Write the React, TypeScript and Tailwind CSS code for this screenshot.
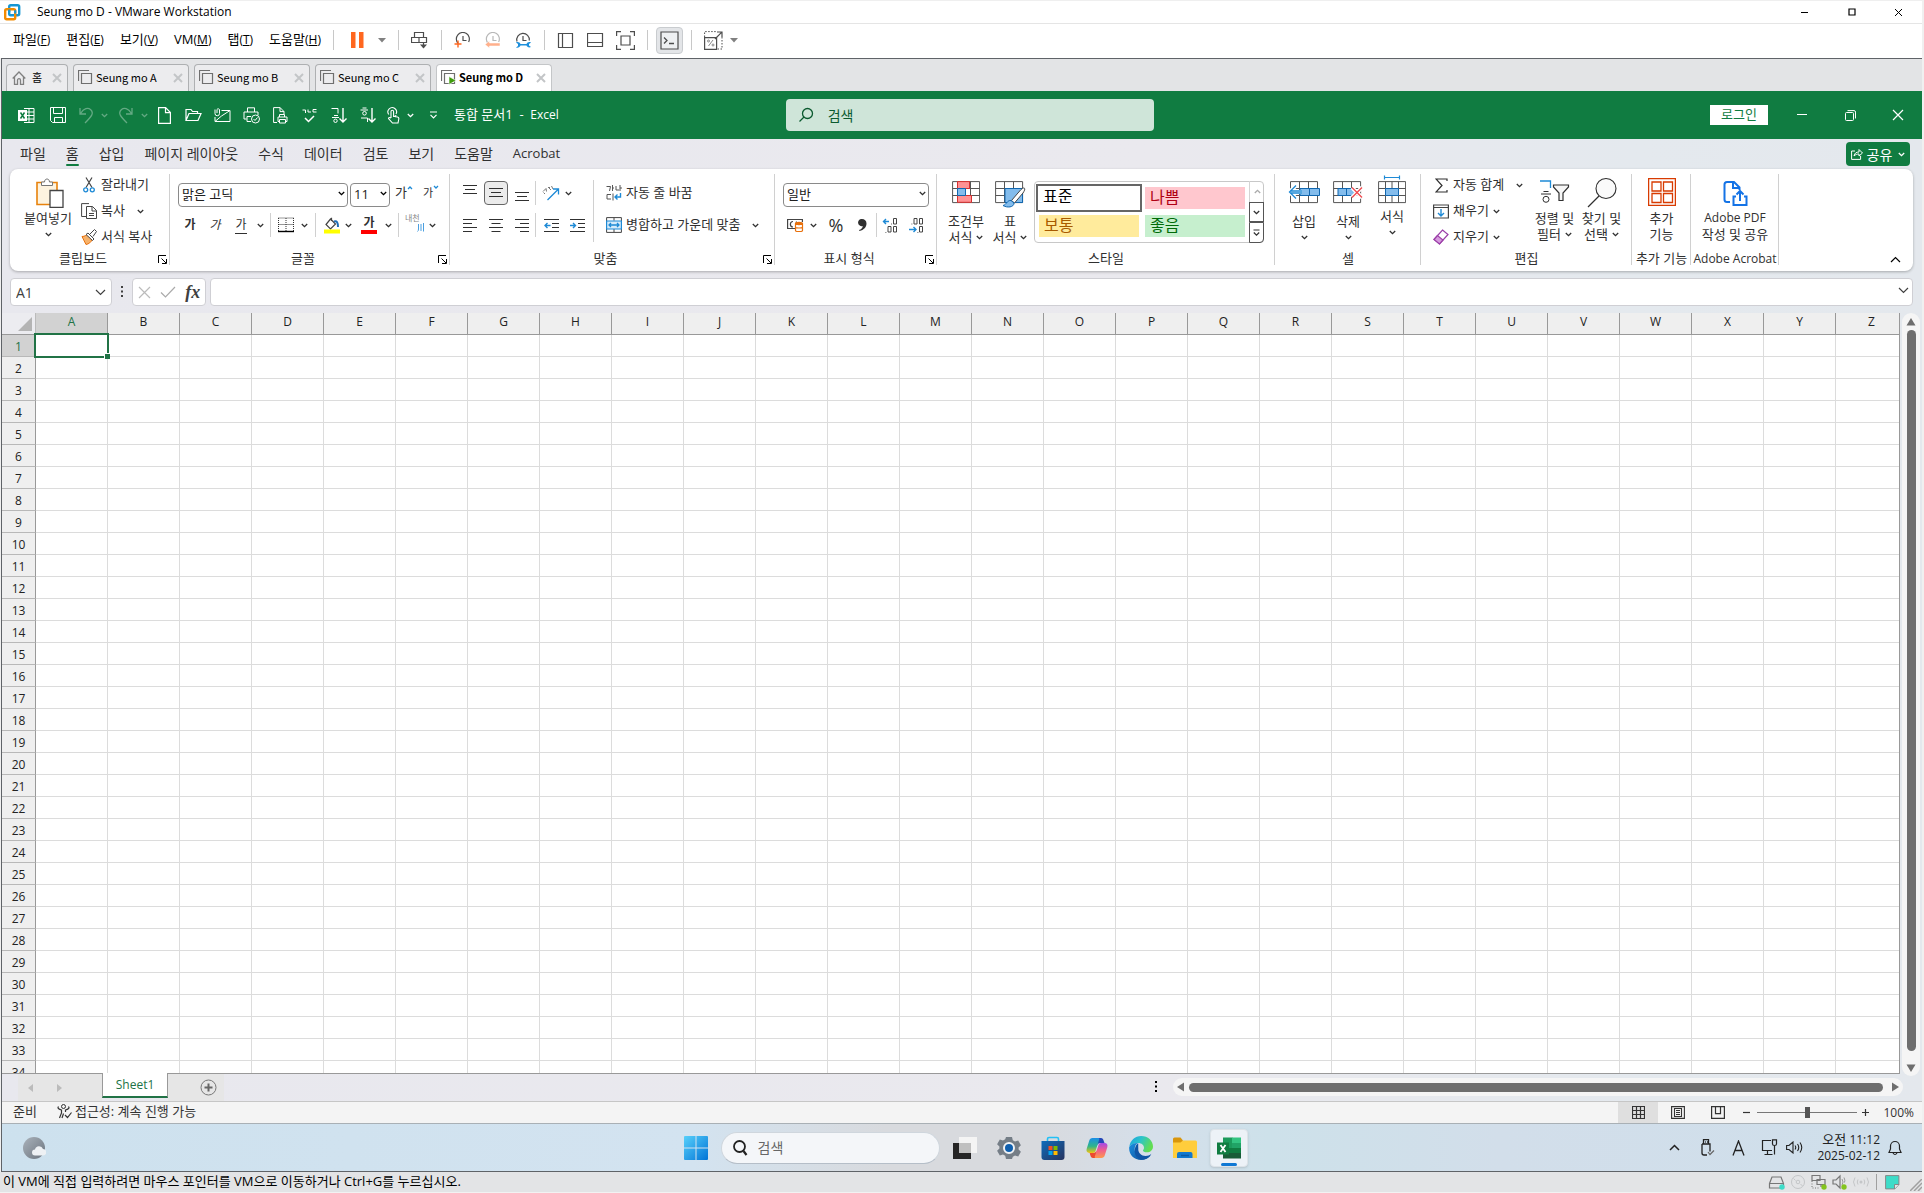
import type { ReactNode } from "react";

type IcoProps = { w: number; h: number; className?: string; children: ReactNode };

function Ico({ w, h, className = "", children }: IcoProps) {
  return (
    <svg width={w} height={h} viewBox={`0 0 ${w} ${h}`} fill="none" stroke="currentColor" aria-hidden="true" className={`shrink-0 ${className}`}>
      {children}
    </svg>
  );
}

function Chevron({ className = "" }: { className?: string }) {
  return (
    <Ico w={7} h={5} className={className}>
      <path d="M.8 1 3.5 3.7 6.2 1" strokeWidth="1.3" />
    </Ico>
  );
}

function DropButton({ label, className = "w-4" }: { label: string; className?: string }) {
  return (
    <button aria-label={label} className={`flex h-6 shrink-0 items-center justify-center ${className}`}>
      <Chevron />
    </button>
  );
}

function IconButton({ label, className = "w-[26px]", children }: { label: string; className?: string; children: ReactNode }) {
  return (
    <button aria-label={label} className={`flex h-6 shrink-0 items-center justify-center ${className}`}>
      {children}
    </button>
  );
}

/* ---------- VMware window ---------- */

function VmTitleBar() {
  return (
    <header className="flex h-6 shrink-0 items-center border-y border-b-[#e5e5e5] border-t-[#efefef] bg-white pl-1 text-black">
      <Ico w={17} h={17}>
        <rect x="5.2" y="1.2" width="10" height="10" rx="1.5" stroke="#1696d3" strokeWidth="2.4" />
        <rect x="1.2" y="5.2" width="10" height="10" rx="1.5" stroke="#f38b00" strokeWidth="2.4" />
        <path d="M5.2 8V5.5M11.2 9.5V6.2" stroke="#1696d3" strokeWidth="2.2" />
      </Ico>
      <h1 className="ml-4 flex-1 text-[12px]">Seung mo D - VMware Workstation</h1>
      <button aria-label="최소화" className="flex h-5 w-[47px] items-center justify-center">
        <Ico w={9} h={9}><path d="M1 4.5h7" /></Ico>
      </button>
      <button aria-label="최대화" className="flex h-5 w-[47px] items-center justify-center">
        <Ico w={8} h={8}><path d="M1 1h6v6H1z" strokeWidth="1.2" /></Ico>
      </button>
      <button aria-label="닫기" className="flex h-5 w-[47px] items-center justify-center">
        <Ico w={9} h={9}><path d="m1 1 7 7M8 1 1 8" /></Ico>
      </button>
    </header>
  );
}

const vmMenus = [
  { name: "파일", mnemonic: "F" },
  { name: "편집", mnemonic: "E" },
  { name: "보기", mnemonic: "V" },
  { name: "VM", mnemonic: "M" },
  { name: "탭", mnemonic: "T" },
  { name: "도움말", mnemonic: "H" },
];

function VmSeparator() {
  return <div className="h-5 w-px shrink-0 bg-[#c8c8c8]" />;
}

function Caret() {
  return <Ico w={8} h={5}><path d="M0 0h8L4 4.5z" fill="#808080" stroke="none" /></Ico>;
}

function ClockFace({ color = "#4d4d4d" }: { color?: string }) {
  return <path d="M4.2 11.5A6.5 6.5 0 1 1 14.6 10M9 4v4.5h3.5" stroke={color} strokeWidth="1.2" />;
}

function VmToolbar() {
  return (
    <div className="flex h-[34px] shrink-0 items-center bg-white pb-0.5 pl-[13px] text-[#4d4d4d]">
      <nav className="mr-3 flex gap-4 text-[13px] text-black">
        {vmMenus.map((m) => (
          <button key={m.mnemonic} className="whitespace-nowrap">
            {m.name}<span className="text-[12px]">(<u>{m.mnemonic}</u>)</span>
          </button>
        ))}
      </nav>
      <VmSeparator />
      <IconButton label="일시 중단" className="ml-2 w-8">
        <Ico w={13} h={16}><path d="M0 0h4.5v16H0zM8 0h4.5v16H8z" fill="#ff671f" stroke="none" /></Ico>
      </IconButton>
      <IconButton label="전원 옵션" className="mr-2 w-4"><Caret /></IconButton>
      <VmSeparator />
      <IconButton label="Ctrl+Alt+Del 보내기" className="mx-2 w-[26px]">
        <Ico w={17} h={17}>
          <path d="M3.5.5h9v5h-9zM.5 5.5H8v5H.5zM8 5.5h7.5v5H8zM12.5 11v4.5" strokeWidth="1.2" />
          <path d="M9 12.5h7l-3.5 4z" fill="currentColor" stroke="none" />
        </Ico>
      </IconButton>
      <VmSeparator />
      <div className="mx-1.5 flex">
        <IconButton label="스냅샷 만들기" className="w-[30px]">
          <Ico w={18} h={17}><ClockFace /><path d="M4 8.5v7M.5 12h7" stroke="#ff671f" strokeWidth="1.4" /></Ico>
        </IconButton>
        <IconButton label="스냅샷으로 되돌리기" className="w-[30px]">
          <Ico w={18} h={17}>
            <ClockFace color="#b8b8b8" />
            <path d="M1 12.5 5.5 9v2H16v3H5.5v2z" fill="#ffb08c" stroke="#fff" strokeWidth=".5" />
          </Ico>
        </IconButton>
        <IconButton label="스냅샷 관리" className="w-[30px]">
          <Ico w={18} h={17}>
            <path d="M3 9.500A6.300 6.300 0 1 1 15.300 8.500M9 4v4.500h3.500" stroke="#4d4d4d" strokeWidth="1.2" />
            <path d="M2 10.500c2-1 4 0 4.500 1.500h6c.5-1.500 2.500-2.500 4.500-1.500l-2 1.500v1.500l2 1.500c-2 1-4 0-4.500-1.500h-6C6 15 4 16.500 2 15.500l2-1.500v-2z" fill="#1e90dc" stroke="none" />
          </Ico>
        </IconButton>
      </div>
      <VmSeparator />
      <div className="mx-1.5 flex">
        <IconButton label="라이브러리" className="w-[30px]">
          <Ico w={17} h={17}><path d="M1.5 1.5h14v14h-14zM5.5 1.5v14" strokeWidth="1.2" /></Ico>
        </IconButton>
        <IconButton label="축소판" className="w-[30px]">
          <Ico w={17} h={17}><path d="M.5 1.5h15v13H.5zM.5 10.5h15" strokeWidth="1.2" /></Ico>
        </IconButton>
        <IconButton label="전체 화면" className="w-[30px]">
          <Ico w={19} h={19}>
            <path d="M.6 5V.6H5M14 .6h4.400V5M18.400 14v4.400H14M5 18.400H.6V14M5 5h9v9H5z" strokeWidth="1.2" />
          </Ico>
        </IconButton>
      </div>
      <VmSeparator />
      <button aria-label="콘솔 보기" className="mx-2 flex size-[27px] items-center justify-center rounded border border-[#c9cccf] bg-[#e3e5e8]">
        <Ico w={19} h={19}>
          <path d="M1 1h17v17H1z" fill="#eef0f2" strokeWidth="1.2" />
          <path d="m4 6.500 3 3-3 3M9 12.500h5" strokeWidth="1.3" />
        </Ico>
      </button>
      <VmSeparator />
      <IconButton label="화면 맞춤" className="ml-2 w-7">
        <Ico w={19} h={19}>
          <path d="M.6 6.600h12v11.800H.6zM11 8 17.800 1.200M13 1h5v5" strokeWidth="1.2" />
          <path d="M.6 6V.6H13M18 6v12h-5" strokeDasharray="1.5 1.5" />
          <path d="m4.500 15 4.500-6" strokeWidth="1" stroke="#888" /><circle cx="4.500" cy="10" r="1" stroke="#888" /><circle cx="9" cy="14" r="1" stroke="#888" />
        </Ico>
      </IconButton>
      <IconButton label="맞춤 옵션" className="w-3"><Caret /></IconButton>
    </div>
  );
}

const vmTabs = ["Seung mo A", "Seung mo B", "Seung mo C", "Seung mo D"];

function CloseX() {
  return <Ico w={10} h={10}><path d="m1 1 8 8M9 1 1 9" stroke="#c3c5c7" strokeWidth="2" /></Ico>;
}

function VmTabs() {
  return (
    <div className="flex h-8 shrink-0 items-end gap-[5px] bg-[#e3e4e6] pl-1 font-['Noto_Sans_CJK_KR',sans-serif] text-[11px] text-black">
      <div className="flex h-[27px] w-[62px] items-center rounded-t border border-b-0 border-[#aeb0b2] bg-[#ececee] px-[5px] pb-px">
        <Ico w={14} h={14} className="text-[#808080]">
          <path d="m.7 7.500 6.300-6.500 6.300 6.500M2.500 6v7.300h3V9.200a1.500 1.500 0 0 1 3 0v4.100h3V6" strokeWidth="1.3" />
        </Ico>
        <button className="ml-1.5 flex-1 text-left">홈</button>
        <button aria-label="홈 닫기"><CloseX /></button>
      </div>
      {vmTabs.map((name) => {
        const active = name === "Seung mo D";
        return (
          <div
            key={name}
            className={`flex h-[27px] w-[116px] items-center rounded-t border border-b-0 pb-px pl-1 pr-[5px] ${active ? "border-[#c4c6c8] bg-white font-bold" : "border-[#aeb0b2] bg-[#ececee]"}`}
          >
            <Ico w={15} h={15} className="text-[#6f6f6f]">
              <path d="M3.500 3.500h10v10h-10zM.5 11V.5H11" strokeWidth="1.2" />
              {active && <path d="M8 6.500v8l7-4z" fill="#3f9c0c" stroke="#fff" strokeWidth=".6" />}
            </Ico>
            <button className="ml-[3px] flex-1 whitespace-nowrap text-left">{name}</button>
            <button aria-label={`${name} 닫기`}><CloseX /></button>
          </div>
        );
      })}
    </div>
  );
}

/* ---------- Excel title bar ---------- */

function ExcelTitleBar() {
  return (
    <div className="flex h-12 shrink-0 items-center bg-[#107c41] text-white">
      <div className="flex flex-1 items-center pl-2">
        <IconButton label="Excel" className="w-8">
          <Ico w={17} h={17}>
            <path d="M6 1.500h10v14H6M11 1.500v14M6 5h10M6 8.500h10M6 12h10" />
            <path d="M0 3h9v11H0z" fill="#fff" stroke="none" />
            <path d="m2.500 5.500 4 6M6.500 5.500l-4 6" stroke="#107c41" strokeWidth="1.5" />
          </Ico>
        </IconButton>
        <IconButton label="저장" className="w-8">
          <Ico w={17} h={17}><path d="M.5.5h15v15h-13l-2-2zM3.500.5v6h9v-6M4.500 15.500v-5h8v5" /></Ico>
        </IconButton>
        <IconButton label="실행 취소" className="w-6 opacity-35">
          <Ico w={15} h={17}><path d="M1 1v6h6M1.500 6.500C5 1 9 .5 11.500 2.500c4 3.500 1 7-5.500 13.500" strokeWidth="1.3" /></Ico>
        </IconButton>
        <DropButton label="실행 취소 목록" className="w-3 opacity-35" />
        <IconButton label="다시 실행" className="w-[30px] opacity-35">
          <Ico w={15} h={17}><path d="M14 1v6H8M13.500 6.500C10 1 6 .5 3.500 2.500c-4 3.500-1 7 5.500 13.500" strokeWidth="1.3" /></Ico>
        </IconButton>
        <DropButton label="다시 실행 목록" className="w-2 opacity-35" />
        <IconButton label="새로 만들기" className="ml-0.5 w-[29px]">
          <Ico w={13} h={17}><path d="M.6.6h7l4.800 5v10.800H.6zM7.500.6v5h5" strokeWidth="1.2" /></Ico>
        </IconButton>
        <IconButton label="열기" className="w-[29px]">
          <Ico w={17} h={14}><path d="M1 12.500V1.500h5l1.500 2h5v2M1 12.500l3-7h12l-3 7z" strokeWidth="1.2" /></Ico>
        </IconButton>
        <IconButton label="메일" className="w-[29px]">
          <Ico w={17} h={15}>
            <path d="M7.500 2.500H16v11H1V9M7.500 8 16 2.500M1 13.500 7.500 8" />
            <path d="M1 1.500v4a2 2 0 0 0 4.500 0v-4a1.500 1.500 0 0 0-2.500 0V5" />
          </Ico>
        </IconButton>
        <IconButton label="빠른 인쇄" className="w-[29px]">
          <Ico w={18} h={17}>
            <path d="M4.500 5V.8h7V5M3.500 12H1V5h14v3M8 9.500H4v5h4" />
            <circle cx="12.500" cy="12" r="4" /><path d="m10.500 12 1.500 1.500 2.500-3" />
          </Ico>
        </IconButton>
        <IconButton label="인쇄 미리 보기" className="w-[29px]">
          <Ico w={15} h={17}><path d="M4 15.500H.6V.6h6.500l3.900 4v2.500M7 .6v4h4M6.500 10V7.500h5V10M6.500 14.500H5V10h9v4.500h-1.500M6.500 12.500h6V16h-6z" /></Ico>
        </IconButton>
        <IconButton label="맞춤법 검사" className="w-[29px]">
          <Ico w={16} h={15}><path d="M.5 2h3v3M6 1.500V4h3M14.500 1.500H11V4h3.500" /><path d="m3 10 3.500 3.500L12 8" strokeWidth="1.5" /></Ico>
        </IconButton>
        <IconButton label="오름차순 정렬" className="w-[29px]">
          <Ico w={17} h={17}><path d="M1.500 1.500h6.500v5M4 8.500h4M2 10.500h7" /><circle cx="5.500" cy="13.800" r="1.700" /><path d="M13 1v14M9.500 11.500 13 15l3.500-3.500" strokeWidth="1.4" /></Ico>
        </IconButton>
        <IconButton label="내림차순 정렬" className="w-[29px]">
          <Ico w={17} h={17}><path d="M3.500 1h4M1.500 3H9M2 11h6.500v4" /><circle cx="5.500" cy="6.300" r="1.800" /><path d="M13 1v14M9.500 11.500 13 15l3.500-3.500" strokeWidth="1.4" /></Ico>
        </IconButton>
        <IconButton label="터치/마우스 모드" className="w-[22px]">
          <Ico w={14} h={18}>
            <path d="M5 12V5.500a1.300 1.300 0 0 1 2.600 0V10l4 1c1 .3 1.400 1 1.200 2l-.8 4H6.500L2.500 12.500c0-1.200 1.500-1.500 2.500-.3M2.800 8.500A4.300 4.300 0 1 1 10 8M7.600 8v3M9.800 9v2.500" strokeWidth="1.1" />
          </Ico>
        </IconButton>
        <DropButton label="터치 모드 옵션" className="w-3" />
        <IconButton label="빠른 실행 도구 모음 사용자 지정" className="ml-1.5 w-[22px]">
          <Ico w={9} h={8}><path d="M1 1h7M1.500 3.800l3 3 3-3" strokeWidth="1.2" /></Ico>
        </IconButton>
        <p className="ml-2.5 whitespace-pre text-[13px]">통합 문서1  -  <span className="text-[12px]">Excel</span></p>
      </div>
      <label className="ml-2 flex h-8 w-[19.2%] items-center rounded-sm bg-[#cfe5d9] px-3 text-[#0b5a2f]">
        <Ico w={16} h={16}><circle cx="9.500" cy="6.500" r="5" strokeWidth="1.3" /><path d="M6 10 1.500 14.500" strokeWidth="1.3" /></Ico>
        <input aria-label="검색" placeholder="검색" className="ml-3.5 w-full bg-transparent text-[14px] outline-none placeholder:text-[#0b5a2f]" />
      </label>
      <div className="flex flex-1 items-center justify-end">
        <button className="mr-2.5 flex h-5 w-[58px] items-center justify-center bg-white text-[13px] text-[#107c41]">로그인</button>
        <button aria-label="창 최소화" className="flex h-8 w-12 items-center justify-center"><Ico w={10} h={10}><path d="M0 4.500h10" /></Ico></button>
        <button aria-label="이전 크기로" className="flex h-8 w-12 items-center justify-center">
          <Ico w={11} h={11}><rect x=".5" y="2.500" width="8" height="8" rx="1" /><path d="M2.500.6H9q1.500 0 1.500 1.500V8.500" /></Ico>
        </button>
        <button aria-label="창 닫기" className="flex h-8 w-12 items-center justify-center"><Ico w={12} h={12}><path d="m1 1 10 10M11 1 1 11" strokeWidth="1.2" /></Ico></button>
      </div>
    </div>
  );
}

/* ---------- Ribbon ---------- */

const ribbonTabs = ["파일", "홈", "삽입", "페이지 레이아웃", "수식", "데이터", "검토", "보기", "도움말", "Acrobat"];

function RibbonTabs() {
  return (
    <nav className="flex h-[30px] shrink-0 items-center pl-2 pr-3">
      {ribbonTabs.map((t) => (
        <button key={t} className={`relative h-7 whitespace-nowrap px-2.5 text-[#303030] ${t === "Acrobat" ? "text-[13px]" : "pb-0.5 text-[14px]"}`}>
          {t}
          {t === "홈" && <span className="absolute inset-x-2.5 bottom-0.5 h-0.5 rounded bg-[#107c41]" />}
        </button>
      ))}
      <button className="ml-auto flex h-6 w-16 items-center justify-center gap-1 rounded bg-[#107c41] text-[14px] text-white">
        <Ico w={12} h={12}>
          <path d="M4 3H.6v8.400h9V8" /><path d="M3 8c.5-3 2.500-4 5-4V1.500L11.500 5 8 8V6C6 6 4.500 6.500 3 8z" />
        </Ico>
        공유
        <Chevron className="ml-0.5" />
      </button>
    </nav>
  );
}

function Group({ name, width, launcher = false, children }: { name: string; width: string; launcher?: boolean; children: ReactNode }) {
  return (
    <section className={`relative flex h-full shrink-0 flex-col ${width}`}>
      <div className="flex h-[78px] items-start">{children}</div>
      <div className={`relative flex h-6 items-center justify-center ${launcher ? "pr-3.5" : ""}`}>
        <h2 className={`whitespace-nowrap text-[#303030] ${name === "Adobe Acrobat" ? "text-[12px]" : "text-[13px]"}`}>{name}</h2>
        {launcher && (
          <button aria-label={`${name} 설정`} className="absolute right-[3px] top-2">
            <Ico w={9} h={9}><path d="M.5 8V.5H8M3.500 3.500 8 8M8.500 4v4.500H4" /></Ico>
          </button>
        )}
      </div>
      <div className="absolute bottom-1.5 right-0 top-[5px] w-px bg-[#d0d0d0]" />
    </section>
  );
}

function BigButton({ icon, lines, drop = false, className }: { icon: ReactNode; lines: string[]; drop?: boolean; className: string }) {
  return (
    <button className={`flex shrink-0 flex-col items-center text-[13px] leading-4 text-[#303030] ${className}`}>
      <span className="flex h-[33px] items-start justify-center">{icon}</span>
      <span className="whitespace-nowrap">{lines[0]}</span>
      <span className="flex h-4 items-center gap-1 whitespace-nowrap">
        {lines[1]}
        {drop && <Chevron />}
      </span>
    </button>
  );
}

function SmallButton({ icon, text, drop = false, chevronGap = "ml-1" }: { icon: ReactNode; text: string; drop?: boolean; chevronGap?: string }) {
  return (
    <button className="flex h-[26px] items-center whitespace-nowrap text-[13px] text-[#303030]">
      <span className="flex w-5 shrink-0 items-center">{icon}</span>
      {text}
      {drop && <Chevron className={chevronGap} />}
    </button>
  );
}

function Divider({ className = "" }: { className?: string }) {
  return <div className={`h-6 w-px shrink-0 bg-[#d0d0d0] ${className}`} />;
}

function Combo({ label, options, className }: { label: string; options: string[]; className: string }) {
  return (
    <div className={`relative h-6 shrink-0 ${className}`}>
      <select aria-label={label} className="h-6 w-full appearance-none rounded border border-[#8a8a8a] bg-white pb-0.5 pl-[3px] text-[13px] leading-5 text-[#202020]">
        {options.map((o) => <option key={o}>{o}</option>)}
      </select>
      <Chevron className="pointer-events-none absolute right-[3px] top-2.5" />
    </div>
  );
}

function Lines({ d, className = "" }: { d: string; className?: string }) {
  return <Ico w={14} h={14} className={className}><path d={d} /></Ico>;
}

function ClipboardGroup() {
  return (
    <Group name="클립보드" width="w-[160px]" launcher>
      <BigButton
        className="ml-3 w-[52px] pt-2"
        drop
        lines={["붙여넣기"]}
        icon={
          <Ico w={28} h={31} className="ml-1">
            <path d="M1 5.500h20v22H1z" fill="#fdf3df" stroke="#e8820c" strokeWidth="1.6" />
            <path d="M5.500 8.500V5h3c0-4 5-4 5 0h3v3.500z" fill="#fff" stroke="#767676" />
            <path d="M14 13.500h13v17H14z" fill="#fff" stroke="#444" strokeWidth="1.3" />
          </Ico>
        }
      />
      <div className="ml-[7px] flex flex-col pt-[3px]">
        <SmallButton
          text="잘라내기"
          icon={
            <Ico w={14} h={16} className="ml-0.5">
              <path d="m3 .5 6 10M9 .5l-6 10" stroke="#444" strokeWidth="1.2" />
              <circle cx="2.700" cy="12.800" r="2" stroke="#1e8ad6" strokeWidth="1.3" /><circle cx="9.300" cy="12.800" r="2" stroke="#1e8ad6" strokeWidth="1.3" />
            </Ico>
          }
        />
        <SmallButton
          text="복사"
          drop
          chevronGap="ml-3"
          icon={
            <Ico w={17} h={16}>
              <path d="M5 13.500H.6V.6H8M5.500 3.500h6l4 4v8h-10zM11 3.500V8h4.500M8 10.500h5M8 12.500h5" stroke="#444" />
            </Ico>
          }
        />
        <SmallButton
          text="서식 복사"
          icon={
            <Ico w={17} h={16}>
              <path d="M1 7.500c3 0 4-1.500 5-2l5 5.500c-1 2-3 4-6 4.500z" fill="#f6b26b" stroke="#e8700c" />
              <path d="m5 5.500 2-1.500 6 6-1.500 1.500zM9 5l4.500-4.500 2 2L12 7.500" fill="#fff" stroke="#444" />
            </Ico>
          }
        />
      </div>
    </Group>
  );
}

function FontGroup() {
  return (
    <Group name="글꼴" width="w-[280px]" launcher>
      <div className="flex flex-col gap-2 pl-2 pt-3">
        <div className="flex items-center">
          <Combo label="글꼴" options={["맑은 고딕"]} className="w-[170px]" />
          <Combo label="글꼴 크기" options={["11"]} className="ml-0.5 w-10" />
          <button aria-label="글꼴 크기 크게" className="ml-px flex h-6 w-[26px] items-start justify-center pt-0.5 text-[13px] text-[#303030]">
            가<Ico w={6} h={5} className="mt-0.5"><path d="m1 4 2-2 2 2" stroke="#1e8ad6" strokeWidth="1.3" /></Ico>
          </button>
          <button aria-label="글꼴 크기 작게" className="ml-px flex h-6 w-[26px] items-start justify-center pt-1 text-[11px] text-[#303030]">
            가<Ico w={6} h={5}><path d="m1 1 2 2 2-2" stroke="#1e8ad6" strokeWidth="1.3" /></Ico>
          </button>
        </div>
        <div className="flex h-6 items-center text-[12px] text-[#303030]">
          <button aria-label="굵게" className="w-6 pb-px font-bold">가</button>
          <button aria-label="기울임꼴" className="w-[26px] pb-px italic">가</button>
          <button aria-label="밑줄" className="w-[26px]"><span className="border-b border-[#303030]">가</span></button>
          <DropButton label="밑줄 옵션" className="w-3" />
          <Divider className="mx-1" />
          <IconButton label="테두리" className="w-[22px]">
            <Ico w={16} h={16}><path d="M.5 1h15M.5 1v13M15.500 1v13M8 1v13M.5 7.500h15" strokeDasharray="1 1" /><path d="M0 14.500h16" stroke="#000" strokeWidth="1.4" /></Ico>
          </IconButton>
          <DropButton label="테두리 옵션" className="w-3.5" />
          <Divider className="mx-1" />
          <IconButton label="채우기 색" className="w-6">
            <Ico w={16} h={17}>
              <path d="m6.500 2 5 5-5 5L2 7.500zM7.500 4V.8" stroke="#444" strokeWidth="1.2" /><path d="M10 4.500c3-1 4 1 4 5.500" stroke="#1e6fb8" strokeWidth="2" />
              <path d="M0 12.500h16v4H0z" fill="#ff0" stroke="none" />
            </Ico>
          </IconButton>
          <DropButton label="채우기 색 옵션" className="w-2" />
          <button aria-label="글꼴 색" className="ml-1 flex h-6 w-[26px] flex-col items-center justify-center font-bold leading-3">
            가<span className="mt-px h-1 w-4 bg-[#f00]" />
          </button>
          <DropButton label="글꼴 색 옵션" className="w-3" />
          <Divider className="ml-1 mr-1.5" />
          <button aria-label="윗주 필드" className="flex h-6 w-[22px] flex-col items-start text-[8px] leading-[10px] text-[#888]">
            내천
            <Ico w={8} h={9} className="ml-3"><path d="M1.500 1v5q0 2-1 2.500M4 1v7M6.500 0v8.500" stroke="#4a9fe0" /></Ico>
          </button>
          <DropButton label="윗주 옵션" className="w-2.5" />
        </div>
      </div>
    </Group>
  );
}

function AlignGroup() {
  return (
    <Group name="맞춤" width="w-[325px]" launcher>
      <div className="flex flex-col gap-2 pl-[7px] pt-3 text-[#303030]">
        <div className="flex items-center">
          <IconButton label="위쪽 맞춤"><Lines d="M0 1.500h14M2 5.500h10M0 9.500h14" className="-mt-1" /></IconButton>
          <button aria-label="가운데 맞춤" className="mx-px flex size-6 items-center justify-center rounded border border-[#666] bg-[#ebebeb]"><Lines d="M0 2.500h14M2 6.500h10M0 10.500h14" /></button>
          <IconButton label="아래쪽 맞춤"><Lines d="M0 4.500h14M2 8.500h10M0 12.500h14" className="mt-1" /></IconButton>
          <Divider className="mr-1" />
          <IconButton label="방향" className="w-[22px]">
            <Ico w={18} h={16}>
              <path d="m1 6.500 3-3 .5 3M3 9 1.500 7.500M6 2l3 3M8 2 7 3M9.500 1 11 4" stroke="#777" />
              <path d="M5.500 15 16 4.500M11 4h5.500v5.500" stroke="#1e8ad6" strokeWidth="1.3" />
            </Ico>
          </IconButton>
          <DropButton label="방향 옵션" className="w-3" />
        </div>
        <div className="flex items-center">
          <IconButton label="왼쪽 맞춤"><Lines d="M0 1.500h14M0 5.500h9M0 9.500h14M0 13.500h9" /></IconButton>
          <IconButton label="가로 가운데 맞춤"><Lines d="M0 1.500h14M2.500 5.500h9M0 9.500h14M2.500 13.500h9" /></IconButton>
          <IconButton label="오른쪽 맞춤"><Lines d="M0 1.500h14M5 5.500h9M0 9.500h14M5 13.500h9" /></IconButton>
          <Divider className="mr-0.5" />
          <IconButton label="내어쓰기">
            <Ico w={15} h={14}><path d="M0 1.500h15M8 5.500h7M8 9.500h7M0 13.500h15" /><path d="M6.500 7.500H1M3.500 5 1 7.500 3.500 10" stroke="#1e8ad6" strokeWidth="1.4" /></Ico>
          </IconButton>
          <IconButton label="들여쓰기">
            <Ico w={15} h={14}><path d="M0 1.500h15M8 5.500h7M8 9.500h7M0 13.500h15" /><path d="M0 7.500h5.500M3 5l2.500 2.500L3 10" stroke="#1e8ad6" strokeWidth="1.4" /></Ico>
          </IconButton>
        </div>
      </div>
      <div className="ml-[3px] mt-[11px] h-[62px] w-px shrink-0 bg-[#d0d0d0]" />
      <div className="ml-3 flex flex-col gap-1.5 pt-[11px]">
        <SmallButton
          text="자동 줄 바꿈"
          icon={
            <Ico w={16} h={16}>
              <path d="M.5 1.500h4l-1 4.500M6.500 0v6M6.500 3H8M10 1v4h3M14 0v6M14 3h2M5 9.500H1V14h4M7 8.500v7" stroke="#555" />
              <path d="M14.500 8v4h-5M11.500 9.500 9 12l2.500 2.500" stroke="#1e8ad6" strokeWidth="1.4" />
            </Ico>
          }
        />
        <SmallButton
          text="병합하고 가운데 맞춤"
          drop
          chevronGap="ml-3"
          icon={
            <Ico w={16} h={16}>
              <path d="M.6.6h14.800v14.800H.6zM8 .6v3M8 12v3" stroke="#444" />
              <path d="M.6 4h14.800v8H.6z" fill="#d6ebfa" stroke="#1e8ad6" strokeWidth="1.2" /><path d="M3 8h10M5 6 3 8l2 2M11 6l2 2-2 2" stroke="#1e8ad6" strokeWidth="1.3" />
            </Ico>
          }
        />
      </div>
    </Group>
  );
}

function DecimalIcon({ top, bottom, arrow }: { top: string; bottom: string; arrow: string }) {
  return (
    <Ico w={17} h={17}>
      <path d={arrow} stroke="#1e8ad6" strokeWidth="1.4" />
      <path d={top} stroke="#444" />
      <path d={bottom} stroke="#444" />
    </Ico>
  );
}

function NumberGroup() {
  return (
    <Group name="표시 형식" width="w-[162px]" launcher>
      <div className="flex flex-col gap-2 pl-2 pt-3 text-[#303030]">
        <Combo label="표시 형식" options={["일반"]} className="w-[146px]" />
        <div className="flex items-center">
          <IconButton label="회계 표시 형식" className="w-6">
            <Ico w={17} h={14}>
              <path d="M8 10.500H.6V1.500h14.800V4M6 3.500C2.500 3.500 2.500 9 6 9M9.500 3.500 8.500 9" stroke="#444" strokeWidth="1.2" />
              <path d="M8.500 5.500v7c0 1.500 7 1.500 7 0v-7zM8.500 5.500c0-1.500 7-1.500 7 0s-7 1.500-7 0M8.500 9c0 1.300 7 1.300 7 0" fill="#fff" stroke="#e8700c" strokeWidth="1.2" />
            </Ico>
          </IconButton>
          <DropButton label="회계 형식 옵션" className="w-3" />
          <button aria-label="백분율" className="ml-1.5 h-6 w-[22px] text-[18px] leading-6">%</button>
          <IconButton label="쉼표 스타일" className="ml-1 w-[22px]">
            <Ico w={9} h={12}><path d="M4 0a3.600 3.600 0 1 0 .8 7C4.500 9 3.300 10.500 1 11l.5 1C6 11 8.500 8 8.500 4.500 8.500 1.500 6.500 0 4 0z" fill="#303030" stroke="none" /></Ico>
          </IconButton>
          <Divider className="ml-[3px] mr-0.5" />
          <IconButton label="자릿수 늘림" className="w-[22px]">
            <DecimalIcon arrow="M7 4.500H1.500M4 2 1.500 4.500 4 7" top="M9 7h.8M11.500 1.500h3V7h-3z" bottom="M3.500 15.500h.8M6 9.500h3V15H6zM11.500 9.500h3V15h-3z" />
          </IconButton>
          <IconButton label="자릿수 줄임" className="ml-1 w-[22px]">
            <DecimalIcon arrow="M1 12.500h7M5.500 10 8 12.500 5.500 15" top="M3.500 7h.8M6 1.500h3V7H6zM11.500 1.500h3V7h-3z" bottom="M9.500 15.500h.8M11.500 9.500h3V15h-3z" />
          </IconButton>
        </div>
      </div>
    </Group>
  );
}

const tableGrid = "M.6 1.600h27v21H.6zM9.500 1.600v21M18.500 1.600v21M.6 8.500h27M.6 15.500h27";

function StyleGroup() {
  return (
    <Group name="스타일" width="w-[338px]">
      <BigButton
        className="ml-[7px] w-11 pt-[11px]"
        drop
        lines={["조건부", "서식"]}
        icon={
          <Ico w={28} h={24}>
            <path d={tableGrid} stroke="#555" fill="#fff" />
            <path d="M5.500 1.600h12v6.900h-12zM5.500 15.500h14v6.800h-14z" fill="#ff9294" stroke="#d8302f" /><path d="M5.500 8.500h8v7h-8z" fill="#83bcec" stroke="#1167b0" />
          </Ico>
        }
      />
      <BigButton
        className="w-11 pt-[11px]"
        drop
        lines={["표", "서식"]}
        icon={
          <Ico w={31} h={28}>
            <path d={tableGrid} stroke="#555" fill="#fff" />
            <path d="M10 8.500h17.500v14H10z" fill="#83bcec" stroke="#1167b0" />
            <path d="M28.500 8c2 0 1.500 2-.5 5l-8.500 10-3-2.500L26 9.500q1.500-1.500 2.500-1.500z" fill="#fff" stroke="#444" />
            <path d="M16 20.500c-4-.5-4 4-8 5 4 2.500 11 2 11-2.500z" fill="#83bcec" stroke="#1167b0" />
          </Ico>
        }
      />
      <div className="ml-0.5 mt-3 flex h-[62px] w-[230px] rounded border border-[#c8c8c8] text-[16px] leading-5">
        <div className="flex flex-1 flex-col gap-[3px] pl-px pt-0.5">
          <div className="flex items-center gap-[3px]">
            <button className="h-7 w-[106px] border-2 border-[#666] bg-white pb-1 pl-[5px] text-left text-black">표준</button>
            <button className="h-[22px] w-[100px] bg-[#ffc7ce] pb-1 pl-[5px] text-left text-[#b00014]">나쁨</button>
          </div>
          <div className="flex gap-1.5 pl-[3px]">
            <button className="h-[22px] w-[100px] bg-[#ffeb9c] pb-1 pl-[5px] text-left text-[#a85a00]">보통</button>
            <button className="h-[22px] w-[100px] bg-[#c6efce] pb-1 pl-[5px] text-left text-[#006b09]">좋음</button>
          </div>
        </div>
        <div className="-my-px -mr-px flex w-[15px] flex-col text-[#303030]">
          <button aria-label="이전 스타일" className="flex h-[21px] items-center justify-center border-l border-[#d4d4d4] text-[#aaa]"><Chevron className="rotate-180" /></button>
          <button aria-label="다음 스타일" className="flex h-5 items-center justify-center border border-[#555]"><Chevron /></button>
          <button aria-label="자세히" className="flex h-[21px] items-center justify-center rounded-br border border-[#555]">
            <Ico w={7} h={8}><path d="M.5 1h6M.8 3.500l2.700 2.700 2.700-2.700" strokeWidth="1.2" /></Ico>
          </button>
        </div>
      </div>
    </Group>
  );
}

function CellGroup() {
  return (
    <Group name="셀" width="w-[146px]">
      <BigButton
        className="ml-[7px] w-11 pt-[11px]"
        drop
        lines={["삽입"]}
        icon={
          <Ico w={32} h={24}>
            <path d="M2.500 1.600h27v21h-27zM11.500 1.600v21M20.500 1.600v21M2.500 8.500h27M2.500 15.500h27" stroke="#555" fill="#fff" />
            <path d="M12 8.500h19.500v7H12zM21.500 8.500v7" fill="#83bcec" stroke="#1167b0" />
            <path d="M14 12H2M8 5.500 1.500 12 8 18.500" stroke="#fff" strokeWidth="4" /><path d="M14 11H2M14 13H2M8 5.500 1.500 12 8 18.500" stroke="#1e8ad6" strokeWidth="1.3" />
          </Ico>
        }
      />
      <BigButton
        className="w-11 pt-[11px]"
        drop
        lines={["삭제"]}
        icon={
          <Ico w={30} h={24}>
            <path d={tableGrid} stroke="#555" fill="#fff" />
            <path d="M5 8.500h14l3 3.500-3 3.500H5zM13.500 8.500v7" fill="#83bcec" stroke="#1167b0" />
            <path d="M19 7.500 29 17.500M29 7.500 19 17.500" stroke="#fff" strokeWidth="4" /><path d="M19 7.500 29 17.500M29 7.500 19 17.500" stroke="#f04a4f" strokeWidth="1.4" />
          </Ico>
        }
      />
      <BigButton
        className="w-11 pt-1.5"
        drop
        lines={["서식"]}
        icon={
          <Ico w={28} h={29}>
            <path d="M.6 6.600h27v21H.6zM7.500 6.600v21M20.500 6.600v21M14 6.600v7M14 20.500v7M.6 13.500h27M.6 20.500h27" stroke="#555" fill="#fff" />
            <path d="M7.500 13.500h13v7h-13z" fill="#83bcec" stroke="#1167b0" /><path d="M6.500 2.500h15M6.500.5v4M21.500.5v4" stroke="#1e8ad6" strokeWidth="1.2" />
          </Ico>
        }
      />
    </Group>
  );
}

function EditGroup() {
  return (
    <Group name="편집" width="w-[211px]">
      <div className="ml-3 flex w-[95px] flex-col pt-[3px]">
        <SmallButton text="자동 합계" drop chevronGap="ml-3" icon={<Ico w={14} h={15} className="ml-0.5"><path d="M12 3V1H1l6 6.500L1 14h11v-2" strokeWidth="1.2" /></Ico>} />
        <SmallButton
          text="채우기"
          drop
          icon={<Ico w={16} h={15}><path d="M.6 1h14.800v13H.6zM.6 3.500h14.800" stroke="#444" strokeWidth="1.2" /><path d="M8 5v7M5 9l3 3 3-3" stroke="#1e8ad6" strokeWidth="1.4" /></Ico>}
        />
        <SmallButton
          text="지우기"
          drop
          icon={<Ico w={16} h={16}><path d="M9.500 1 15 5.500 6.500 15 1 10.500z" fill="#fff" stroke="#9b3fa8" strokeWidth="1.2" /><path d="M4.500 6.500 1 10.500 6.500 15l3.500-4z" fill="#d79ade" stroke="#9b3fa8" strokeWidth="1.2" /></Ico>}
        />
      </div>
      <BigButton
        className="ml-[3px] w-[47px] pt-2"
        drop
        lines={["정렬 및", "필터"]}
        icon={
          <Ico w={30} h={26} className="mt-0.5">
            <path d="M0 2h10.500v7" stroke="#1e8ad6" strokeWidth="1.3" /><path d="M3.500 12.500h5M1 15h10" /><circle cx="6" cy="20.300" r="3" />
            <path d="M13.500 6h15v2L23 14v7.500h-4V14l-5.500-6z" fill="#f7f7f7" strokeWidth="1.2" />
          </Ico>
        }
      />
      <BigButton
        className="w-[47px] pt-2"
        drop
        lines={["찾기 및", "선택"]}
        icon={<Ico w={30} h={31}><circle cx="19" cy="11.500" r="10" fill="#fafafa" strokeWidth="1.1" /><path d="M12 19 1 30" strokeWidth="1.2" /></Ico>}
      />
    </Group>
  );
}

function Ribbon() {
  return (
    <div className="ml-2 mr-[9px] flex h-[102px] shrink-0 rounded-lg bg-white shadow-[0_1px_3px_rgba(0,0,0,0.28)]">
      <ClipboardGroup />
      <FontGroup />
      <AlignGroup />
      <NumberGroup />
      <StyleGroup />
      <CellGroup />
      <EditGroup />
      <Group name="추가 기능" width="w-[59px]">
        <BigButton
          className="w-full pt-2"
          lines={["추가", "기능"]}
          icon={<Ico w={28} h={29}><path d="M.6 1.600h26.800v26.800H.6zM4 5h9v9H4zM15.500 5h9v9h-9zM4 16.500h9v9H4zM15.500 16.500h9v9h-9z" stroke="#d83b01" strokeWidth="1.3" /></Ico>}
        />
      </Group>
      <Group name="Adobe Acrobat" width="w-[88px]">
        <button className="flex w-full flex-col items-center pt-2 text-[12px] leading-4 text-[#303030]">
          <span className="flex h-[33px] items-start pt-1">
            <Ico w={25} h={26}>
              <path d="M7 21H4q-2.500 0-2.500-2.500V3.500Q1.500 1 4 1h7l5.500 5.500V9M10 1v6h6.500" stroke="#1473e6" strokeWidth="2" />
              <path d="M13 15.500h-2.500V24h13v-8.500H21M17 20v-9M13.500 13.500 17 10l3.500 3.500" stroke="#1473e6" strokeWidth="2" />
            </Ico>
          </span>
          <span className="whitespace-nowrap">Adobe PDF</span>
          <span className="whitespace-nowrap text-[13px]">작성 및 공유</span>
        </button>
      </Group>
      <button aria-label="리본 메뉴 축소" className="mb-2 ml-auto mr-3 self-end">
        <Ico w={11} h={7}><path d="m1 6 4.500-4.500L10 6" strokeWidth="1.2" /></Ico>
      </button>
    </div>
  );
}

function FormulaBar() {
  return (
    <div className="my-[7px] ml-2 mr-[9px] flex h-7 shrink-0 items-center text-[#404040]">
      <div className="flex h-full w-[102px] items-center rounded border border-[#cfcfd4] bg-white px-[5px]">
        <input aria-label="이름 상자" defaultValue="A1" className="w-full min-w-0 text-[14px] outline-none" />
        <button aria-label="이름 목록"><Ico w={11} h={7}><path d="m1 1 4.500 4.500L10 1" strokeWidth="1.2" /></Ico></button>
      </div>
      <Ico w={20} h={12}><path d="M9 1h2M9 5.500h2M9 10h2" strokeWidth="2" /></Ico>
      <div className="flex h-full w-[74px] items-center justify-around rounded border border-[#cfcfd4] bg-white">
        <button aria-label="취소"><Ico w={13} h={13}><path d="m1 1 11 11M12 1 1 12" stroke="#bbb" strokeWidth="1.2" /></Ico></button>
        <button aria-label="입력"><Ico w={16} h={12}><path d="M1 6.500 5.500 11 15 1" stroke="#aaa" strokeWidth="1.2" /></Ico></button>
        <button aria-label="함수 삽입" className="font-['Liberation_Serif',serif] text-[18px] font-bold italic leading-5">fx</button>
      </div>
      <div className="ml-1 flex h-full flex-1 items-center rounded border border-[#cfcfd4] bg-white pl-1.5 pr-[3px]">
        <input aria-label="수식 입력줄" className="w-full min-w-0 text-[14px] outline-none" />
        <button aria-label="수식 입력줄 확장" className="mb-1"><Ico w={11} h={7}><path d="m1 1 4.500 4.500L10 1" strokeWidth="1.2" /></Ico></button>
      </div>
    </div>
  );
}

/* ---------- Sheet ---------- */

const columns = "ABCDEFGHIJKLMNOPQRSTUVWXYZ".split("");
const rows = Array.from({ length: 34 }, (_, i) => i + 1);

function Sheet() {
  return (
    <div className="flex min-h-0 flex-1">
      <div className="min-w-0 flex-1 overflow-hidden border-b border-r border-[#999] bg-white">
        <table className="w-[1906px] table-fixed border-separate border-spacing-0 text-[12px] leading-4 text-[#222]">
          <colgroup>
            <col className="w-[34px]" />
            {columns.map((c) => <col key={c} className="w-[72px]" />)}
          </colgroup>
          <thead>
            <tr>
              <th className="h-[22px] border-b border-r border-b-[#999] border-r-[#bbb] bg-[#ececf0] p-0">
                <Ico w={14} h={14} className="ml-4"><path d="M14 0v14H0z" fill="#b4b4b4" stroke="none" /></Ico>
              </th>
              {columns.map((c) => (
                <th
                  key={c}
                  scope="col"
                  className={`h-[22px] border-b border-r border-[#999] p-0 pb-1 font-normal ${c === "A" ? "bg-[#d2d2d2] text-[#217346]" : "bg-[#efefef]"}`}
                >
                  {c}
                </th>
              ))}
            </tr>
          </thead>
          <tbody>
            {rows.map((r) => (
              <tr key={r}>
                <th
                  scope="row"
                  className={`h-[22px] border-b border-r border-b-[#b8b8b8] border-r-[#999] p-0 pt-0.5 font-normal ${r === 1 ? "bg-[#d2d2d2] text-[#217346]" : "bg-[#efefef]"}`}
                >
                  {r}
                </th>
                {columns.map((c) => (
                  <td key={c} className="relative border-b border-r border-[#dcdcdc] p-0">
                    {c === "A" && r === 1 && (
                      <span className="absolute -left-0.5 -top-0.5 z-10 h-[25px] w-[75px] border-2 border-[#217346]">
                        <span className="absolute -bottom-[3px] -right-[3px] size-1.5 border-l border-t border-white bg-[#217346]" />
                      </span>
                    )}
                  </td>
                ))}
              </tr>
            ))}
          </tbody>
        </table>
      </div>
      <div className="-mb-0.5 ml-0.5 mr-0.5 flex w-[18px] flex-col items-center justify-between rounded-full bg-[#f5f5f5] pb-1 pt-[5px]">
        <button aria-label="위로 스크롤" className="leading-none"><Ico w={10} h={8}><path d="M5 0 9.500 7.500H.5z" fill="#6e6e6e" stroke="none" /></Ico></button>
        <div className="mb-[5px] mt-1 w-[9px] flex-1 rounded-full bg-[#6e6e6e]" />
        <button aria-label="아래로 스크롤" className="mt-2 leading-none"><Ico w={10} h={8}><path d="M5 8 .5.5h9z" fill="#6e6e6e" stroke="none" /></Ico></button>
      </div>
    </div>
  );
}

function SheetTabs() {
  return (
    <div className="flex h-[27px] shrink-0 items-start">
      <div className="ml-4 flex h-full w-[84px] items-center gap-6 bg-[#e6e6e6] pl-2.5 text-[#bbb]">
        <button aria-label="이전 시트"><Ico w={5} h={8}><path d="M5 0v8L0 4z" fill="currentColor" stroke="none" /></Ico></button>
        <button aria-label="다음 시트"><Ico w={5} h={8}><path d="M0 0v8l5-4z" fill="currentColor" stroke="none" /></Ico></button>
      </div>
      <button className="-mt-px h-[25px] w-[66px] border-x border-b-2 border-x-[#999] border-b-[#217346] bg-white text-[12px] text-[#217346]">Sheet1</button>
      <div className="flex h-full w-14 items-center bg-[#e6e6e6] pl-8">
        <button aria-label="새 시트">
          <Ico w={17} h={17}><circle cx="8.500" cy="8.500" r="7.500" stroke="#777" /><path d="M8.500 4.500v8M4.500 8.500h8" stroke="#666" strokeWidth="2" /></Ico>
        </button>
      </div>
      <div className="ml-auto flex w-[40%] items-center pt-1">
        <Ico w={4} h={12}><path d="M1 1h2M1 5.500h2M1 10h2" strokeWidth="2" /></Ico>
        <div className="ml-[15px] mr-[19px] flex h-[18px] flex-1 items-center rounded-full bg-[#f5f5f5] px-1">
          <button aria-label="왼쪽으로 스크롤"><Ico w={8} h={10}><path d="M7 .5v9L0 5z" fill="#6e6e6e" stroke="none" /></Ico></button>
          <div className="ml-1 mr-2 h-[9px] flex-1 rounded-full bg-[#6e6e6e]" />
          <button aria-label="오른쪽으로 스크롤"><Ico w={8} h={10}><path d="M1 .5v9L8 5z" fill="#6e6e6e" stroke="none" /></Ico></button>
        </div>
      </div>
    </div>
  );
}

function StatusBar() {
  return (
    <div className="flex h-[23px] shrink-0 items-center border-y border-b-[#a9b0b5] border-t-[#c6c6c6] bg-[#f4f4f4] pl-[11px] pr-2 text-[13px] text-[#333]">
      <span className="pb-0.5">준비</span>
      <button className="ml-5 flex items-center gap-[3px] pb-0.5">
        <Ico w={15} h={15}>
          <circle cx="6.500" cy="2.500" r="2" />
          <path d="M1.500 2.500C0 4.500 2.500 5.500 4.500 6v3L2.500 14M11.500 2.500c1.500 2-1 3-3 3.500v2M6.500 9.500 5 14M8 11l2.500 2.500 4-5" strokeWidth="1.2" />
        </Ico>
        접근성: 계속 진행 가능
      </button>
      <div className="ml-auto flex h-full items-center">
        <button aria-label="기본 보기" className="flex h-full w-10 items-center justify-center bg-[#dfdfdf]"><Ico w={13} h={13}><path d="M.5.5h12v12H.5zM4.500.5v12M8.500.5v12M.5 4.500h12M.5 8.500h12" strokeWidth="1.2" /></Ico></button>
        <button aria-label="페이지 레이아웃 보기" className="flex h-full w-10 items-center justify-center"><Ico w={14} h={13}><path d="M.6.6h12.800v11.800H.6zM3.500 2.500h7v8h-7zM5 4.500h4M5 6.500h4M5 8.500h4" strokeWidth="1.1" /></Ico></button>
        <button aria-label="페이지 나누기 미리 보기" className="flex h-full w-10 items-center justify-center"><Ico w={14} h={13}><path d="M.6.6h12.800v11.800H.6zM4.500.6v7h5v-7" strokeWidth="1.2" /></Ico></button>
        <button aria-label="축소" className="ml-1 w-[15px]"><Ico w={9} h={9}><path d="M1 4.500h7" strokeWidth="1.2" /></Ico></button>
        <input
          type="range"
          aria-label="확대/축소"
          defaultValue={50}
          className="h-3 w-[100px] appearance-none bg-[linear-gradient(#777,#777)] bg-[length:100%_1px] bg-center bg-no-repeat [&::-webkit-slider-thumb]:h-[11px] [&::-webkit-slider-thumb]:w-[5px] [&::-webkit-slider-thumb]:appearance-none [&::-webkit-slider-thumb]:bg-[#555]"
        />
        <button aria-label="확대" className="ml-1"><Ico w={9} h={9}><path d="M1 4.500h7M4.500 1v7" strokeWidth="1.2" /></Ico></button>
        <span className="w-11 text-right text-[12px]">100%</span>
      </div>
    </div>
  );
}

/* ---------- Windows taskbar ---------- */

function TaskButton({ label, active = false, children }: { label: string; active?: boolean; children: ReactNode }) {
  return (
    <button
      aria-label={label}
      className={`relative flex size-[38px] shrink-0 items-center justify-center rounded ${active ? "border border-[#dde3e8] bg-[#edf2f7] shadow-sm" : ""}`}
    >
      {children}
      {active && <span className="absolute bottom-0 h-[3px] w-4 rounded-full bg-[#0f78d4]" />}
    </button>
  );
}

function Taskbar() {
  return (
    <div className="flex h-12 shrink-0 items-center border-b border-[#5f6368] bg-[linear-gradient(90deg,#cde1ee_0%,#d3e3f0_36%,#d8dade_46%,#d8dade_54%,#d5dfea_60%,#cde1ea_66%,#d2deea_78%,#cfdfeb_100%)]">
      <div className="flex flex-1 pl-5">
        <button aria-label="위젯">
          <Ico w={24} h={24}>
            <defs>
              <linearGradient id="moon" x1="0" y1="0" x2="1" y2="1"><stop stopColor="#aab2bb" /><stop offset="1" stopColor="#6b747e" /></linearGradient>
            </defs>
            <circle cx="12" cy="12" r="11" fill="url(#moon)" stroke="none" />
            <path d="M13 19.500a3 3 0 0 1 0-6 4.200 4.200 0 0 1 8-.5 3.200 3.200 0 0 1 0 6.500z" fill="#eef1f4" stroke="none" />
          </Ico>
        </button>
      </div>
      <div className="flex shrink-0 items-center gap-1.5">
        <TaskButton label="시작">
          <Ico w={24} h={24}>
            <defs>
              <linearGradient id="win" x1="0" y1="0" x2="24" y2="24" gradientUnits="userSpaceOnUse"><stop stopColor="#57d0fb" /><stop offset="1" stopColor="#0274d6" /></linearGradient>
            </defs>
            <path d="M0 1q0-1 1-1h10.500v11.500H0zM12.500 0H23q1 0 1 1v10.500H12.500zM0 12.500h11.500V24H1q-1 0-1-1zM12.500 12.500H24V23q0 1-1 1H12.500z" fill="url(#win)" stroke="none" />
          </Ico>
        </TaskButton>
        <label className="flex h-8 w-[219px] shrink-0 items-center rounded-full border border-b-[#b5bec8] border-x-[#cfd6dd] border-t-[#cfd6dd] bg-[#f4f6f9] pl-2.5">
          <Ico w={16} h={18} className="text-[#222]"><circle cx="7.500" cy="7.500" r="5.500" strokeWidth="1.8" /><path d="m11.500 12 3 4" strokeWidth="2.2" /></Ico>
          <input aria-label="작업 표시줄 검색" placeholder="검색" className="ml-2.5 w-32 bg-transparent text-[14px] outline-none placeholder:text-[#666]" />
        </label>
        <TaskButton label="작업 보기">
          <Ico w={24} h={24}>
            <path d="M0 7h18v16H0z" fill="#252525" stroke="none" /><path d="M6 1h18v16H6z" fill="#f4f4f4" stroke="none" /><path d="M6 7h12v10H6z" fill="#c0c0c0" stroke="none" />
          </Ico>
        </TaskButton>
        <TaskButton label="설정">
          <Ico w={24} h={24}>
            <path d="M9 1h6l.8 3.200 2.200 1.300 3.200-1 2.700 4.800-2.300 2.300v1.800l2.300 2.300-2.700 4.800-3.200-1-2.200 1.300L15 23H9l-.8-3.200L6 18.500l-3.200 1L.1 14.700l2.300-2.300v-1.800L.1 8.300l2.700-4.800 3.200 1 2.200-1.300z" fill="#757e87" stroke="none" />
            <circle cx="12" cy="12" r="5" fill="#0f5fae" stroke="#f0f3f6" strokeWidth="2" />
          </Ico>
        </TaskButton>
        <TaskButton label="Microsoft Store">
          <Ico w={24} h={24}>
            <defs>
              <linearGradient id="store" x1="0" y1="0" x2="1" y2="1"><stop stopColor="#0d6cbb" /><stop offset="1" stopColor="#27335f" /></linearGradient>
            </defs>
            <path d="M6.500 6V3q0-1.500 1.500-1.500h8q1.500 0 1.500 1.500v3" stroke="#22c0f5" strokeWidth="1.6" />
            <path d="M.5 5h23v16q0 3-3 3h-17q-3 0-3-3z" fill="url(#store)" stroke="none" />
            <path d="M7.500 10h4v4h-4z" fill="#f25022" stroke="none" /><path d="M12.500 10h4v4h-4z" fill="#7fba00" stroke="none" />
            <path d="M7.500 15h4v4h-4z" fill="#00a4ef" stroke="none" /><path d="M12.500 15h4v4h-4z" fill="#ffb900" stroke="none" />
          </Ico>
        </TaskButton>
        <TaskButton label="Copilot">
          <Ico w={24} h={24}>
            <defs>
              <linearGradient id="copA" x1="0" y1="0" x2="0" y2="1"><stop stopColor="#1a8ee8" /><stop offset=".55" stopColor="#2fb58a" /><stop offset="1" stopColor="#f2c511" /></linearGradient>
              <linearGradient id="copB" x1="0" y1="0" x2="0" y2="1"><stop stopColor="#a349e8" /><stop offset=".5" stopColor="#f2608a" /><stop offset="1" stopColor="#fd9a4b" /></linearGradient>
            </defs>
            <path d="M11.500 2H16c1.500 0 2.200 1 2.600 2.500L19.500 7H15c-1.500 0-2 1-2.500 2.500z" fill="#2446b8" stroke="none" />
            <path d="M7.500 2H13c1 0 1.500.6 1.200 1.600L10.500 15c-.4 1.300-1.200 2-2.500 2H4.500C2 17 1 15 1.700 12.800l2.500-8C4.800 3 5.800 2 7.500 2z" fill="url(#copA)" stroke="none" />
            <path d="M12.500 22H8c-1.500 0-2.200-1-2.600-2.500L4.700 17h3.800c1.500 0 2.500-1 3-2.500z" fill="#ec4b2f" stroke="none" />
            <path d="M16.500 22H11c-1 0-1.500-.6-1.200-1.600L13.500 9c.4-1.300 1.200-2 2.500-2h3.500C22 7 23 9 22.300 11.200l-2.500 8c-.6 1.800-1.600 2.800-3.300 2.800z" fill="url(#copB)" stroke="none" />
          </Ico>
        </TaskButton>
        <TaskButton label="Edge">
          <Ico w={24} h={24}>
            <defs>
              <linearGradient id="edgeA" x1="0" y1="0" x2="1" y2=".4"><stop stopColor="#1ba0e2" /><stop offset=".5" stopColor="#2cc4c9" /><stop offset="1" stopColor="#62dd52" /></linearGradient>
              <linearGradient id="edgeB" x1="0" y1="0" x2="1" y2="1"><stop stopColor="#1b8fe0" /><stop offset="1" stopColor="#0c4a96" /></linearGradient>
            </defs>
            <path d="M.3 11C1 4.500 6 0 12.300 0 19 0 24 4.800 24 10.500c0 3.500-2.700 5.800-6 5.800-2.500 0-4-.8-4-1.800 0-.6 1-1 1-2.800 0-2.500-2.400-4.700-5.800-4.700C5 7 1.500 9 .3 11z" fill="url(#edgeA)" stroke="none" />
            <path d="M.2 11C2 8.200 5.500 6.800 9 7c-2 1-3.300 3-3.300 6 0 5 4.300 8.600 9.300 8.600 2.600 0 4.800-1 6.800-2.600C19.600 22 16 24 12 24 5 24-.5 18.500.2 11z" fill="url(#edgeB)" stroke="none" />
            <path d="M9.300 12.500c-.6 4 3.200 7.500 7.200 7.500 2.300 0 4.300-.7 5.900-2.200-1.800 4-5.200 6-9.400 5.700C7.500 23 5 18 5.900 13c.4-2.500 1.500-4.500 3.400-5.700 0 0-.2 2 0 5.200z" fill="#0f55a5" stroke="none" />
          </Ico>
        </TaskButton>
        <TaskButton label="파일 탐색기">
          <Ico w={24} h={24}>
            <path d="M0 3q0-1.500 1.500-1.500h6L10 4.500V8H0z" fill="#d9960c" stroke="none" />
            <path d="M0 6.500h7.500L10 4.500h12.500Q24 4.500 24 6v16H0z" fill="#ffcd3c" stroke="none" />
            <path d="M4 22v-4q0-2 2-2h11.500q2 0 2 2v4z" fill="#1279cf" stroke="none" /><path d="M8 19.500h8" stroke="#0b5aa5" strokeWidth="1.5" />
          </Ico>
        </TaskButton>
        <TaskButton label="Excel 창" active>
          <Ico w={24} h={24}>
            <path d="M6 1.500h9.500V12H6zM6 12h9.500v5H6z" fill="#1c9a5b" stroke="none" /><path d="M15 1.500h9V7h-9z" fill="#33c481" stroke="none" />
            <path d="M15 7h9v5h-9z" fill="#21a366" stroke="none" /><path d="M6 12h18v5H6z" fill="#107c41" stroke="none" /><path d="M6 17h18v5.500H6z" fill="#185c37" stroke="none" />
            <path d="M0 6.500h12v12H0z" fill="#107c41" stroke="none" /><path d="m3.500 9 5 7M8.500 9l-5 7" stroke="#fff" strokeWidth="1.8" />
          </Ico>
        </TaskButton>
      </div>
      <div className="flex flex-1 items-center justify-end pr-5 text-[#222]">
        <button aria-label="숨겨진 아이콘 표시" className="w-[33px]"><Ico w={11} h={7} className="mx-auto"><path d="m1 6 4.500-4.500L10 6" strokeWidth="1.5" /></Ico></button>
        <button aria-label="USB 장치" className="w-[33px]">
          <Ico w={14} h={17} className="mx-auto"><path d="M2.500 5V.6h5V5M1 5h8v7.500M1 5v9q0 2 2 2h3M4 3h.8M6 3h.8" strokeWidth="1.3" /><path d="m7 13 2 2.500 4-4" strokeWidth="1.2" stroke="#666" /></Ico>
        </button>
        <button aria-label="입력 표시기 A" className="w-[29px]"><Ico w={13} h={16} className="mx-auto"><path d="M1 15.500 6.500 1 12 15.500M3 10.500h7" strokeWidth="1.3" /></Ico></button>
        <button aria-label="네트워크" className="w-[33px]">
          <Ico w={17} h={17} className="mx-auto"><path d="M10 1.500H1.500v10H11M6.500 12v3.500M3.500 15.500h8M11.500.8h4V5q0 1.500-2 1.500t-2-1.500zM13.500 6.500v9" strokeWidth="1.2" /></Ico>
        </button>
        <button aria-label="볼륨" className="w-[17px]">
          <Ico w={17} h={13}><path d="M.6 4.500H3L7 1v11L3 8.500H.6zM9 4.500q1.500 2 0 4M11.500 3q2.500 3.500 0 7M14 1.500q3.500 5 0 10" strokeWidth="1.1" /></Ico>
        </button>
        <button className="ml-3.5 text-right text-[12px] leading-4"><span className="text-[13px]">오전</span> 11:12<br />2025-02-12</button>
        <button aria-label="알림" className="ml-2">
          <Ico w={14} h={16}><path d="M1 12.500 2.500 9V6a4.500 4.500 0 0 1 9 0v3l1.500 3.500zM5 13q2 3 4 0" strokeWidth="1.2" /></Ico>
        </button>
      </div>
    </div>
  );
}

function VmStatus() {
  return (
    <footer className="flex h-[21px] shrink-0 items-center border-b border-[#f2f2f2] bg-[#e3e4e6] pl-[3px] text-black">
      <p className="flex-1 text-[13px]">이 VM에 직접 입력하려면 마우스 포인터를 VM으로 이동하거나 Ctrl+G를 누르십시오.</p>
      <div className="flex items-center text-[#777]">
        <Ico w={21} h={16}><path d="M2.500 9.500 5 3h9l2.500 6.500V14h-14zM2.500 9.500h14" strokeWidth="1.2" /><circle cx="15" cy="13" r="2.700" fill="#3ddcc8" stroke="none" /></Ico>
        <Ico w={21} h={16}><circle cx="10" cy="8" r="6.500" stroke="#c4c6c8" /><circle cx="10" cy="8" r="1.800" stroke="#c4c6c8" /><path d="m5.500 4.500 2 2M12.500 10l2 2" stroke="#c4c6c8" /></Ico>
        <Ico w={21} h={16}><path d="M3 1.500h8v5H3zM8 5.500h8v5H8zM12 11v2" strokeWidth="1.2" /><path d="M3 7v7h8" strokeDasharray="1 1.5" /><circle cx="15" cy="13" r="2.700" fill="#84c41f" stroke="none" /></Ico>
        <Ico w={21} h={16}><path d="M3 6h3l4-4v12l-4-4H3z" strokeWidth="1.2" /><path d="M12 5q2 3 0 6M14 3.500q1.500 3 .5 5" stroke="#999" /><circle cx="14" cy="13" r="2.700" fill="#84c41f" stroke="none" /></Ico>
        <Ico w={21} h={16}><circle cx="10" cy="8" r="1.500" fill="#c4c6c8" stroke="none" /><path d="M7 5.500q-1.500 2.500 0 5M13 5.500q1.500 2.500 0 5M4 3.500q-3 4.500 0 9M16 3.500q3 4.500 0 9" stroke="#c4c6c8" /></Ico>
        <div className="ml-1 mr-2 h-4 w-px bg-[#a0a0a0]" />
        <Ico w={15} h={15}><path d="M.6.6h13.300v9l-4 4.300H.6z" fill="#3ddcc8" stroke="#888" /><path d="M14 9.500H9.500V14" fill="#e3e4e6" stroke="#888" /></Ico>
        <Ico w={12} h={12} className="ml-2.5 mt-1.5"><path d="M0 12 12 0M4 12l8-8M8 12l4-4" stroke="#a0a0a0" strokeWidth="1.5" /></Ico>
      </div>
    </footer>
  );
}

export default function App() {
  return (
    <div className="flex h-screen flex-col overflow-hidden bg-[#f0f0f0] pr-0.5 font-['Open_Sans','Noto_Sans_CJK_KR',sans-serif]">
      <VmTitleBar />
      <VmToolbar />
      <div className="ml-px flex min-h-0 flex-1 flex-col border-l border-t border-[#5f6368]">
        <VmTabs />
        <main className="flex min-h-0 flex-1 flex-col bg-[linear-gradient(90deg,#e8e8ee_0%,#eae9ee_60%,#e4e9ee_85%,#e4e8ed_100%)]">
          <ExcelTitleBar />
          <RibbonTabs />
          <Ribbon />
          <FormulaBar />
          <Sheet />
          <SheetTabs />
          <StatusBar />
        </main>
        <Taskbar />
      </div>
      <VmStatus />
    </div>
  );
}
